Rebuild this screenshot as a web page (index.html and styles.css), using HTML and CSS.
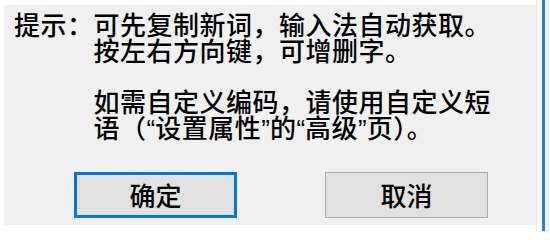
FILE: index.html
```html
<!DOCTYPE html>
<html lang="zh-CN">
<head>
<meta charset="utf-8">
<title>提示</title>
<link rel="stylesheet" href="styles.css">
</head>
<body>
<div class="screen">
  <div class="main">
    <div class="panel">
      <div class="tip">
        <div class="label">提示：</div>
        <div class="body">
          <div class="para">
            <div class="line">可先复制新词，输入法自动获取。</div>
            <div class="line">按左右方向键，可增删字。</div>
          </div>
          <div class="para second">
            <div class="line">如需自定义编码，请使用自定义短</div>
            <div class="line">语（<span class="q">“</span>设置属性<span class="q">”</span>的<span class="q">“</span>高级<span class="q">”</span>页）。</div>
          </div>
        </div>
      </div>
      <div class="buttons">
        <button class="btn default">确定</button>
        <button class="btn">取消</button>
      </div>
    </div>
  </div>
  <div class="edge">
    <div class="edge-orange"></div>
    <div class="edge-white"></div>
    <div class="edge-blue"></div>
    <div class="edge-light"></div>
  </div>
</div>
</body>
</html>
```

FILE: styles.css
```css
html, body {
  margin: 0;
  padding: 0;
  background: #ffffff;
}
body {
  width: 550px;
  height: 233px;
  overflow: hidden;
  font-family: "Noto Sans CJK SC", sans-serif;
  color: #000;
}
.screen {
  display: flex;
  height: 233px;
}
.main {
  width: 536px;
  padding: 5px 0 8px 4px;
  box-sizing: border-box;
  height: 233px;
}
.panel {
  background: #f0f0f0;
  height: 100%;
  box-sizing: border-box;
  padding: 6px 0 0 10px;
  display: flex;
  flex-direction: column;
}
.tip {
  display: flex;
  font-size: 26px;
  line-height: 26px;
  letter-spacing: 0.5px;
  font-weight: 500;
}
.label {
  flex: none;
}
.body {
  flex: none;
}
.line {
  height: 26px;
  white-space: nowrap;
}
.q {
  font-family: "Liberation Sans", sans-serif;
  line-height: 0;
  letter-spacing: 0;
}
.para.second {
  margin-top: 25px;
}
.buttons {
  display: flex;
  gap: 88px;
  margin-top: 32px;
  padding-left: 60px;
}
.btn {
  width: 163px;
  height: 46px;
  box-sizing: border-box;
  background: #e1e1e1;
  border: 1px solid #adadad;
  font-family: "Noto Sans CJK SC", sans-serif;
  font-weight: 500;
  font-size: 26px;
  line-height: 26px;
  color: #000;
  padding: 0;
  margin: 0;
}
.btn.default {
  border: 3px solid #0078d7;
}
.edge {
  display: flex;
  height: 231px;
}
.edge-orange {
  width: 1px;
  background: #fbe6cf;
}
.edge-white {
  width: 5px;
  background: #ffffff;
}
.edge-blue {
  width: 3px;
  background: #2a7fd4;
}
.edge-light {
  width: 5px;
  background: #eef5fc;
}
```
